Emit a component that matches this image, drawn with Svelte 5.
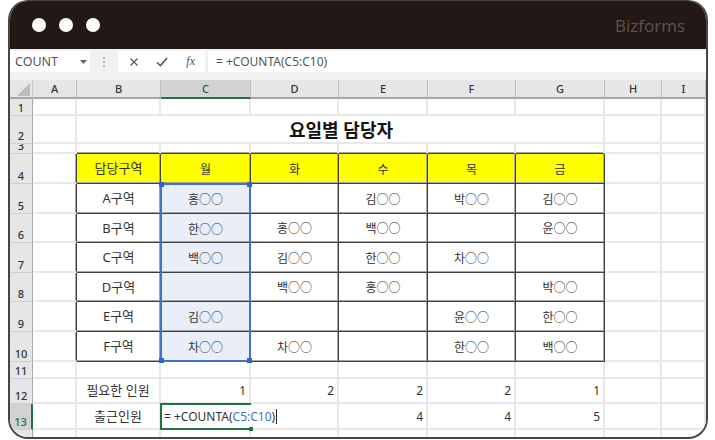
<script lang="ts">
    const cols = ['A', 'B', 'C', 'D', 'E', 'F', 'G', 'H', 'I'];
    const rows = [1, 2, 3, 4, 5, 6, 7, 8, 9, 10, 11, 12, 13, 14];

    // sheet contents by cell name
    const data: Record<string, string> = {
        B4: '담당구역', C4: '월', D4: '화', E4: '수', F4: '목', G4: '금',
        B5: 'A구역', C5: '홍○○', E5: '김○○', F5: '박○○', G5: '김○○',
        B6: 'B구역', C6: '한○○', D6: '홍○○', E6: '백○○', G6: '윤○○',
        B7: 'C구역', C7: '백○○', D7: '김○○', E7: '한○○', F7: '차○○',
        B8: 'D구역', D8: '백○○', E8: '홍○○', G8: '박○○',
        B9: 'E구역', C9: '김○○', F9: '윤○○', G9: '한○○',
        B10: 'F구역', C10: '차○○', D10: '차○○', F10: '한○○', G10: '백○○',
        B12: '필요한 인원', C12: '1', D12: '2', E12: '2', F12: '2', G12: '1',
        B13: '출근인원', E13: '4', F13: '4', G13: '5'
    };

    const inTable = (c: string) => 'BCDEFG'.includes(c);

    function cellClass(c: string, r: number) {
        const list = ['cell'];
        const right = (c === 'A' || inTable(c)) && r >= 4 && r <= 10;
        const bottom = inTable(c) && r >= 3 && r <= 10;
        if (inTable(c) && r === 4) list.push('head');
        if (right && bottom) list.push('edge-rb');
        else if (right) list.push('edge-r');
        else if (bottom) list.push('edge-b');
        if (c === 'C' && r >= 5 && r <= 10) list.push('picked');
        if (c === 'B') list.push('label');
        if (r >= 12 && c !== 'B') list.push('num');
        return list.join(' ');
    }
</script>

<div class="window">
    <header class="titlebar">
        <div class="dots"><i></i><i></i><i></i></div>
        <span class="brand">Bizforms</span>
    </header>

    <div class="toolbar">
        <div class="box namebox">
            <span>COUNT</span>
            <svg width="7" height="4" viewBox="0 0 7 4"><path d="M0 0h7L3.500 4z" fill="#666" /></svg>
        </div>
        <div class="grip"><b></b><b></b><b></b></div>
        <div class="box buttons">
            <svg width="8" height="8" viewBox="0 0 8 8"><path d="M.5.500l7 7M7.500.500l-7 7" stroke="#555" stroke-width="1.200" fill="none" /></svg>
            <svg width="12" height="10" viewBox="0 0 12 10"><path d="M1 5.500l3.500 3L11 1" stroke="#555" stroke-width="1.600" fill="none" /></svg>
            <span class="fx">fx</span>
        </div>
        <div class="box formula">= +COUNTA(C5:C10)</div>
    </div>

    <div class="sheet">
        <div class="corner"><svg width="14" height="14" viewBox="0 0 14 14"><path d="M14 1v13H1z" fill="#bdbdbd" /></svg></div>
        {#each cols as c}
            <div class="colhead" class:on={c === 'C'}>{c}</div>
        {/each}

        {#each rows as r}
            <div class="rowhead" class:on={r === 13}>{r === 14 ? '' : r}</div>
            {#each cols as c}
                {#if r === 2 && c === 'B'}
                    <div class="cell title">요일별 담당자</div>
                {:else if r === 2 && inTable(c)}
                    <!-- merged into B2 -->
                {:else if r === 13 && c === 'C'}
                    <div class="cell active">
                        <span class="edit">= +COUNTA(<em>C5:C10</em>)<u></u></span>
                        <s></s>
                    </div>
                {:else}
                    <div class={cellClass(c, r)}>{data[c + r] ?? ''}</div>
                {/if}
            {/each}
        {/each}

        <div class="range"><s class="tl"></s><s class="tr"></s><s class="bl"></s><s class="br"></s></div>
    </div>
</div>

<style>
    :global(body) {
        background: #fff;
    }

    .window {
        box-sizing: border-box;
        width: 700px;
        height: 439px;
        margin-left: 8px;
        border: 2px solid #4b4542;
        border-top-width: 1px;
        border-radius: 20px;
        overflow: hidden;
        background: #fff;
        font-family: "Noto Sans", "Noto Sans CJK KR", sans-serif;
        color: #333;
    }

    .titlebar {
        display: flex;
        align-items: center;
        justify-content: space-between;
        height: 48px;
        padding: 0 21px 0 22px;
        background: #231815;
    }

    .dots {
        display: flex;
        gap: 13px;
    }

    .dots i {
        width: 14px;
        height: 14px;
        border-radius: 50%;
        background: #fff;
    }

    .brand {
        font: 17px "Open Sans", sans-serif;
        color: #5a5452;
    }

    .toolbar {
        display: flex;
        gap: 3px;
        box-sizing: border-box;
        height: 31px;
        padding: 2px 0 8px;
        background: #f1f1f1;
    }

    .box {
        display: flex;
        align-items: center;
        background: #fff;
        font-size: 12px;
        color: #555;
    }

    .namebox {
        justify-content: space-between;
        width: 80px;
        padding: 0 3px 0 5px;
        box-sizing: border-box;
        font-size: 12.500px;
    }

    .grip {
        display: flex;
        flex-direction: column;
        justify-content: center;
        gap: 2px;
        width: 22px;
        align-items: center;
    }

    .grip b {
        width: 2px;
        height: 2px;
        background: #b5b5b5;
    }

    .buttons {
        justify-content: space-between;
        width: 87px;
        padding: 0 10px 0 12px;
        box-sizing: border-box;
    }

    .fx {
        font: italic 12px "Liberation Serif", serif;
        color: #555;
    }

    .formula {
        flex: 1;
        padding-left: 8px;
    }

    .sheet {
        position: relative;
        display: grid;
        grid-template-columns: 23px 44px 84px 90px 88px 89px 88px 89px 57px 44px;
        grid-template-rows: 19px 17px 28px 10px 30px 30px 29px 30px 29px 30px 30px 17px 25px 26px 9px;
        font-size: 12px;
    }

    .corner {
        display: flex;
        align-items: flex-end;
        justify-content: flex-end;
        padding: 0 2px 1px 0;
        background: #e6e6e6;
        border-bottom: 2px solid #a8a8a8;
        border-right: 1px solid #c8c8c8;
    }

    .colhead {
        display: flex;
        align-items: center;
        justify-content: center;
        background: #e6e6e6;
        border-bottom: 2px solid #a8a8a8;
        border-right: 1px solid #c0c0c0;
        font-size: 11px;
        font-weight: 500;
    }

    .colhead.on {
        background: #d2d2d2;
        border-bottom-color: #217346;
        color: #1f5c3a;
    }

    .rowhead {
        display: flex;
        align-items: flex-end;
        justify-content: center;
        overflow: hidden;
        background: #e6e6e6;
        border-bottom: 1px solid #cfcfcf;
        border-right: 1px solid #a8a8a8;
        font-size: 11px;
        font-weight: 500;
        line-height: 14px;
    }

    .rowhead.on {
        background: #d2d2d2;
        border-right: 2px solid #217346;
        color: #217346;
    }

    .cell {
        display: flex;
        align-items: center;
        justify-content: center;
        min-width: 0;
        box-sizing: border-box;
        border-right: 2px solid #e8e8e8;
        border-bottom: 2px solid #e8e8e8;
        white-space: nowrap;
    }

    /* table lines: a dark pixel with a softer one inside, about 1.5px in the reference */
    .cell.edge-r {
        border-right: 1px solid #3f3f3f;
        box-shadow: inset -1px 0 #a6a6a6;
    }

    .cell.edge-b {
        border-bottom: 1px solid #3f3f3f;
        box-shadow: inset 0 -1px #a6a6a6;
    }

    .cell.edge-rb {
        border-right: 1px solid #3f3f3f;
        border-bottom: 1px solid #3f3f3f;
        box-shadow: inset -1px -1px #a6a6a6;
    }

    .cell.head {
        background: #ff0;
    }

    .cell.picked {
        background: #e9eef8;
        padding-top: 1px;
    }

    .cell.label {
        font-size: 13px;
        padding-bottom: 2px;
    }

    .cell.num {
        justify-content: flex-end;
        padding-right: 3px;
    }

    .cell.title {
        grid-column: span 6;
        font-size: 18px;
        font-weight: 700;
        color: #111;
        padding-left: 2px;
    }

    .cell.active {
        position: relative;
        justify-content: flex-start;
        margin: -1px 0 0 -1px;
        padding-left: 2px;
        border: 2px solid #217346;
        border-right: none;
    }

    .edit {
        position: relative;
        z-index: 1;
        background: #fff;
        color: #333;
    }

    .edit em {
        font-style: normal;
        color: #4472c4;
    }

    .edit u {
        display: inline-block;
        width: 1px;
        height: 15px;
        margin-left: 1px;
        vertical-align: -3px;
        background: #222;
    }

    .active s {
        position: absolute;
        right: -2px;
        bottom: -3px;
        width: 4px;
        height: 4px;
        background: #217346;
    }

    /* overlay: absolute so it stays out of auto placement, the grid area is its box */
    .range {
        position: absolute;
        grid-column: 4 / 5;
        grid-row: 6 / 12;
        inset: -1px 0 0 -1px;
        border: 2px solid #3f72c8;
        pointer-events: none;
    }

    .range s {
        position: absolute;
        width: 5px;
        height: 5px;
        background: #2f66c4;
    }

    .tl { left: -3px; top: -3px; }
    .tr { right: -3px; top: -3px; }
    .bl { left: -3px; bottom: -3px; }
    .br { right: -3px; bottom: -3px; }
</style>
